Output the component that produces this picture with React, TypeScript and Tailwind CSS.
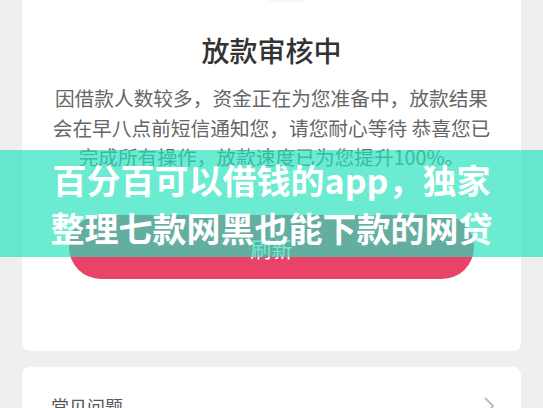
import React from "react";

export default function App() {
  const cjk = { fontFamily: '"Noto Sans CJK SC", "Noto Sans", sans-serif' };
  return (
    <div
      className="relative w-[543px] h-[408px] overflow-hidden bg-[#efefef]"
      style={cjk}
    >
      <div className="flex flex-col gap-[16px] px-[22px]">
        {/* main card */}
        <div className="relative flex flex-col items-center rounded-b-[8px] bg-white pb-[72px]">
          <div className="h-[2px] w-[36px] rounded-b-full bg-[#faf8ee] ml-[31px]" />
          <div className="mt-[30px] text-[28px] font-medium leading-[36px] text-[#333333]">
            放款审核中
          </div>
          <div className="mt-[15px] text-center text-[19.7px] leading-[29.5px] text-[#666666]">
            因借款人数较多，资金正在为您准备中，放款结果
            <br />
            会在早八点前短信通知您，请您耐心等待 恭喜您已
            <br />
            完成所有操作，放款速度已为您提升100%。
          </div>
          <div className="mt-[43px] flex h-[64px] w-[405px] items-center justify-center rounded-full bg-[#e9436a] pt-[4px] text-[21px] text-white">
            刷新
          </div>
        </div>
        {/* FAQ card */}
        <div className="flex items-center justify-between rounded-[8px] bg-white pl-[29px] pr-[26px] pt-[26px] pb-[20px]">
          <span className="text-[18px] leading-[26px] text-[#555555]">常见问题</span>
          <svg width="12" height="20" viewBox="0 0 12 20" fill="none">
            <path d="M2 2 L10 10 L2 18" stroke="#bdbdbd" strokeWidth="2" />
          </svg>
        </div>
      </div>

      {/* overlay banner */}
      <div className="absolute left-0 top-[150px] flex h-[107px] w-full flex-col items-center justify-center bg-[rgba(37,225,187,0.68)]">
        <div className="text-center text-[34px] font-bold leading-[48px] text-white">
          百分百可以借钱的app，独家
          <br />
          整理七款网黑也能下款的网贷
        </div>
      </div>
    </div>
  );
}
